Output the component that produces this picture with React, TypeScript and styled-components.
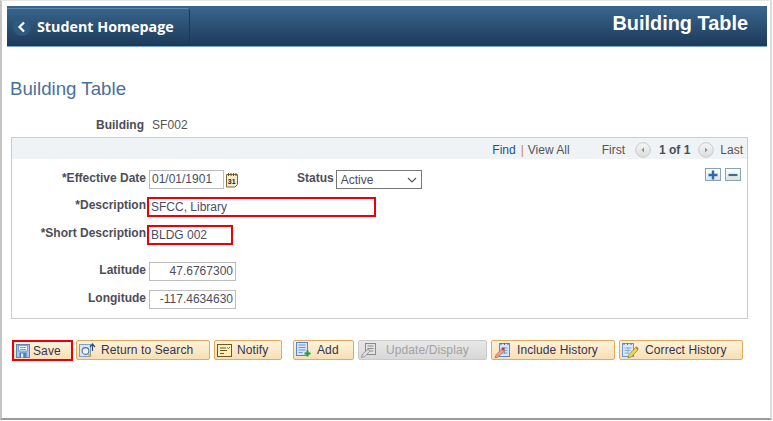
import { createGlobalStyle, styled } from "styled-components";

const GlobalStyle = createGlobalStyle`
  html, body { margin: 0; padding: 0; background: #ffffff; }
  body { font-family: "Liberation Sans", Arial, sans-serif; font-size: 12px; color: #333; }
`;

const SaveIcon = () => (
  <svg width="14" height="14" viewBox="0 0 14 14">
    <rect x="0.5" y="0.5" width="13" height="13" fill="#a6c6ee" stroke="#5b86c4" />
    <rect x="2.500" y="1.500" width="9" height="5.500" fill="#f3f7fd" stroke="#5b86c4" strokeWidth="0.7" />
    <path d="M4 3.500h6M4 5.500h6" stroke="#5b86c4" strokeWidth="0.8" />
    <rect x="3.500" y="8.500" width="7" height="5" fill="#4f7dbd" />
    <rect x="5" y="9.500" width="2.200" height="4" fill="#e8f0fb" />
  </svg>
);

const ReturnIcon = () => (
  <svg width="17" height="17" viewBox="0 0 17 17">
    <rect x="0.5" y="2.5" width="11" height="12" fill="#dbe7f7" stroke="#7d9fd0" />
    <circle cx="6.5" cy="9" r="3.4" fill="#eef5fc" stroke="#4e6f9e" strokeWidth="1.1" />
    <path d="M9 11.5l3 3" stroke="#d5b13c" strokeWidth="1.8" />
    <path d="M13.5 9V2.500M11 5l2.500-3L16 5" fill="none" stroke="#34506f" strokeWidth="1.2" />
  </svg>
);

const NotifyIcon = () => (
  <svg width="15" height="13" viewBox="0 0 15 13">
    <rect x="0.5" y="0.5" width="14" height="12" fill="#fbeeb8" stroke="#6b5a2a" />
    <path d="M3 4h6M3 6.500h7M3 9.500h4" stroke="#6b5a2a" strokeWidth="1" />
    <path d="M10 3.500l1.500 1 1.500-1.500" fill="none" stroke="#3d9a3d" strokeWidth="1" />
  </svg>
);

const AddIcon = () => (
  <svg width="15" height="16" viewBox="0 0 15 16">
    <rect x="0.5" y="0.5" width="11" height="13" fill="#d6e4f8" stroke="#5b86c4" />
    <path d="M2.500 3h7M2.500 5.500h7M2.500 8h7M2.500 10.500h4" stroke="#6f97d0" strokeWidth="1" />
    <path d="M11.500 8.500v6M8.500 11.500h6" stroke="#1f9a3c" strokeWidth="2" />
  </svg>
);

const UpdateIcon = () => (
  <svg width="15" height="15" viewBox="0 0 15 15">
    <rect x="4.500" y="0.500" width="10" height="11" fill="#e4e4e4" stroke="#8a8a8a" />
    <path d="M6.500 3h6M6.500 5.500h6M9 8h3.500" stroke="#8a8a8a" strokeWidth="1" />
    <path d="M0.500 14.500l1-3.500 5.500-5 2 2-5 5.500z" fill="#dcdcdc" stroke="#8a8a8a" strokeWidth="0.8" />
  </svg>
);

const IncludeIcon = () => (
  <svg width="17" height="17" viewBox="0 0 17 17">
    <rect x="5.500" y="1.500" width="10" height="13" fill="#d6e4f8" stroke="#5b86c4" />
    <path d="M7 1v2M10.500 1v2M14 1v2" stroke="#3f6cb0" strokeWidth="1" />
    <path d="M7.500 6h6M7.500 8.500h6M7.500 11h6M10.500 5v7" stroke="#6f97d0" strokeWidth="0.9" />
    <path d="M1 16l1.200-3.500 6-6 2.300 2.300-6 6z" fill="#e9a08e" stroke="#b8654f" strokeWidth="0.7" />
    <circle cx="9" cy="7" r="1.400" fill="#d8352a" />
  </svg>
);

const CorrectIcon = () => (
  <svg width="17" height="17" viewBox="0 0 17 17">
    <rect x="0.5" y="1.500" width="11" height="13" fill="#dbe7f8" stroke="#6d95cf" />
    <path d="M2 1v2M5.500 1v2M9 1v2" stroke="#3f6cb0" strokeWidth="1" />
    <path d="M2.500 6h7M2.500 8.500h6M2.500 11h4M6 5v7" stroke="#86a9da" strokeWidth="0.9" />
    <path d="M6 16l1-3.500 6.500-7 2.500 2.300-6.500 7z" fill="#f1d548" stroke="#8a7a26" strokeWidth="0.7" />
    <path d="M13.500 5.500l1-1 2 2-0.500 1.300z" fill="#e2574a" />
  </svg>
);

const CalendarIcon = () => (
  <svg width="13" height="16" viewBox="0 0 13 16">
    <path d="M0.500 2.500h11v10l-2.500 2.500h-8.500z" fill="#f6ecc8" stroke="#7c6a36" />
    <path d="M2.500 1v3M5 1v3M7.500 1v3M10 1v3" stroke="#5d5230" strokeWidth="1" />
    <text x="1.800" y="11.500" fontSize="7" fontWeight="700" fontFamily="Liberation Sans" fill="#222">31</text>
  </svg>
);

const NavIcon = ({ flip }: { flip?: boolean }) => (
  <svg width="16" height="16" viewBox="0 0 16 16">
    <defs>
      <linearGradient id="navFill" x1="0" y1="0" x2="0" y2="1">
        <stop offset="0" stopColor="#f6f6f6" />
        <stop offset="1" stopColor="#dcdcdc" />
      </linearGradient>
    </defs>
    <circle cx="8" cy="8" r="7.300" fill="url(#navFill)" stroke="#c8cccd" />
    <path d={flip ? "M7 5.500v5l2.500-2.500z" : "M9 5.500v5l-2.500-2.500z"} fill="#8a8f92" />
  </svg>
);

const Frame = styled.div`
  box-sizing: border-box;
  width: 772px;
  height: 420px;
  border-top: 1px solid #e6e6e6;
  border-left: 2px solid #c4c4c4;
  border-right: 2px solid #dcdcdc;
  border-bottom: 2px solid #9a9a9a;
  display: flex;
  flex-direction: column;
`;

const Banner = styled.header`
  height: 40px;
  margin: 5px 3px 0 5px;
  flex: none;
  display: flex;
  align-items: stretch;
  justify-content: space-between;
  background: linear-gradient(#3a668e, #1d3a58);
  border-bottom: 1px solid #7aa4d6;
`;

const BackButton = styled.div`
  width: 183px;
  margin: 2px 0 1px;
  display: flex;
  align-items: center;
  gap: 6px;
  padding-left: 6px;
  box-sizing: border-box;
  border: 1px solid #1c3854;
  border-left: none;
  border-top-color: #5e88ae;
  border-radius: 0 4px 4px 0;
  color: #ffffff;
  font-family: "Open Sans", sans-serif;
  font-weight: 700;
  font-size: 14.3px;
`;

const BackCircle = styled.span`
  width: 18px;
  height: 18px;
  border-radius: 50%;
  background: #2f5a80;
  display: flex;
  align-items: center;
  justify-content: center;
`;

const BannerTitle = styled.div`
  color: #ffffff;
  font-weight: 700;
  font-size: 19.9px;
  padding: 6px 19px 0 0;
`;

const Heading = styled.h1`
  margin: 30px 0 0 8px;
  font-weight: 400;
  font-size: 18.7px;
  line-height: 24px;
  color: #4b6f9e;
`;

const KeyRow = styled.div`
  display: flex;
  align-items: center;
  height: 16px;
  margin-top: 16px;
`;

const Label = styled.label`
  width: 142px;
  box-sizing: border-box;
  text-align: right;
  font-weight: 700;
  font-size: 12px;
  color: #4d4d57;
  flex: none;
`;

const KeyValue = styled.span`
  margin-left: 8px;
  color: #555;
  font-size: 12px;
  letter-spacing: 0.1px;
`;

const Panel = styled.section`
  box-sizing: border-box;
  width: 737px;
  height: 182px;
  margin: 4px 0 0 9px;
  border: 1px solid #cccccc;
  flex: none;
`;

const PanelHeader = styled.div`
  box-sizing: border-box;
  height: 21px;
  background: #f0f3f5;
  display: flex;
  align-items: center;
  justify-content: flex-end;
  padding: 2px 4px 0 0;
  font-size: 12px;
  color: #555;
`;

const PanelLink = styled.span`
  color: #1f4e9e;
`;

const Pipe = styled.span`
  color: #c28a3c;
  margin: 0 4px 0 5px;
`;

const NavGroup = styled.span`
  display: flex;
  align-items: center;
  gap: 6px;
  margin-left: 32px;
`;

const NavWord = styled.span<{ $after?: number }>`
  margin-right: ${(p) => p.$after ?? 0}px;
`;

const Count = styled.b`
  color: #44505a;
  margin: 0 2px;
`;

const PanelBody = styled.div`
  display: flex;
  flex-direction: column;
  padding-top: 11px;
`;

const FormRow = styled.div<{ $gap?: number }>`
  display: flex;
  align-items: center;
  height: 19px;
  margin-top: ${(p) => p.$gap ?? 0}px;
`;

const FieldLabel = styled(Label)`
  width: 134px;
  margin-top: -3px;
`;

const Input = styled.div<{ $w: number; $right?: boolean }>`
  box-sizing: border-box;
  width: ${(p) => p.$w}px;
  height: 19px;
  margin-left: 3px;
  padding: 0 2px;
  border: 1px solid #bdbdbd;
  background: #fff;
  font-size: 12px;
  line-height: 17px;
  color: #4d4d5c;
  text-align: ${(p) => (p.$right ? "right" : "left")};
`;

const MarkedInput = styled(Input)`
  margin-left: 1px;
  height: 20px;
  padding: 0 2px;
  border: 2px solid #e8000b;
  line-height: 17px;
`;

const CalendarSlot = styled.span`
  margin-left: 2px;
  display: flex;
`;

const StatusLabel = styled.label`
  margin-left: 58px;
  margin-top: -3px;
  font-weight: 700;
  color: #4d4d57;
`;

const Select = styled.div`
  box-sizing: border-box;
  width: 86px;
  height: 19px;
  margin-left: 2px;
  padding: 0 4px;
  border: 1px solid #777;
  display: flex;
  align-items: center;
  justify-content: space-between;
  color: #4d4d5c;
`;

const RowTools = styled.span`
  margin-left: auto;
  margin-right: 6px;
  display: flex;
  gap: 4px;
  align-self: flex-start;
  margin-top: -2px;
`;

const SquareButton = styled.span`
  box-sizing: border-box;
  width: 16px;
  height: 13px;
  border: 1px solid #8aa3b0;
  background: linear-gradient(#ffffff, #d8e2e8);
  display: flex;
  align-items: center;
  justify-content: center;
`;

const Toolbar = styled.div`
  display: flex;
  gap: 4px;
  margin: 21px 0 0 10px;
  flex: none;
`;

const ToolButton = styled.button<{ $w: number; $off?: boolean; $marked?: boolean; $push?: number }>`
  box-sizing: border-box;
  width: ${(p) => p.$w}px;
  height: ${(p) => (p.$marked ? 21 : 20)}px;
  margin-left: ${(p) => p.$push ?? 0}px;
  margin-right: ${(p) => (p.$marked ? -1 : 0)}px;
  padding: 0 0 0 2px;
  display: flex;
  align-items: center;
  gap: 3px;
  border: ${(p) => (p.$marked ? "2px solid #e8000b" : p.$off ? "1px solid #c9c9c9" : "1px solid #e3aa5c")};
  border-radius: ${(p) => (p.$marked ? 0 : 2)}px;
  background: ${(p) => (p.$off ? "linear-gradient(#e8e8e8, #d8d8d8)" : "linear-gradient(#fdf3dc, #f9dfb4)")};
  color: ${(p) => (p.$off ? "#a2a2a2" : "#34344e")};
  font-family: "Liberation Sans", Arial, sans-serif;
  font-size: 12px;
  letter-spacing: 0.1px;
`;

const IconSlot = styled.span<{ $w: number }>`
  width: ${(p) => p.$w}px;
  display: flex;
  flex: none;
`;

export default function App() {
  return (
    <Frame>
      <GlobalStyle />
      <Banner>
        <BackButton>
          <BackCircle>
            <svg width="10" height="12" viewBox="0 0 10 12">
              <path d="M7 1.500L2.500 6 7 10.500" fill="none" stroke="#ffffff" strokeWidth="2.200" />
            </svg>
          </BackCircle>
          Student Homepage
        </BackButton>
        <BannerTitle>Building Table</BannerTitle>
      </Banner>
      <Heading>Building Table</Heading>
      <KeyRow>
        <Label>Building</Label>
        <KeyValue>SF002</KeyValue>
      </KeyRow>
      <Panel>
        <PanelHeader>
          <PanelLink>Find</PanelLink>
          <Pipe>|</Pipe>
          View All
          <NavGroup>
            <NavWord $after={4}>First</NavWord>
            <NavIcon />
            <Count>1 of 1</Count>
            <NavIcon flip />
            <NavWord>Last</NavWord>
          </NavGroup>
        </PanelHeader>
        <PanelBody>
          <FormRow>
            <FieldLabel>*Effective Date</FieldLabel>
            <Input $w={75}>01/01/1901</Input>
            <CalendarSlot><CalendarIcon /></CalendarSlot>
            <StatusLabel>Status</StatusLabel>
            <Select>
              Active
              <svg width="10" height="6" viewBox="0 0 10 6">
                <path d="M1 1l4 4 4-4" fill="none" stroke="#555" strokeWidth="1.100" />
              </svg>
            </Select>
            <RowTools>
              <SquareButton>
                <svg width="10" height="10" viewBox="0 0 10 10">
                  <path d="M5 0.500v9M0.500 5h9" stroke="#2f6aa8" strokeWidth="2.400" />
                </svg>
              </SquareButton>
              <SquareButton>
                <svg width="10" height="10" viewBox="0 0 10 10">
                  <path d="M0.500 5h9" stroke="#3f6f8a" strokeWidth="2.200" />
                </svg>
              </SquareButton>
            </RowTools>
          </FormRow>
          <FormRow $gap={8}>
            <FieldLabel>*Description</FieldLabel>
            <MarkedInput $w={229}>SFCC, Library</MarkedInput>
          </FormRow>
          <FormRow $gap={9}>
            <FieldLabel>*Short Description</FieldLabel>
            <MarkedInput $w={86}>BLDG 002</MarkedInput>
          </FormRow>
          <FormRow $gap={18}>
            <FieldLabel>Latitude</FieldLabel>
            <Input $w={87} $right>47.6767300</Input>
          </FormRow>
          <FormRow $gap={9}>
            <FieldLabel>Longitude</FieldLabel>
            <Input $w={87} $right>-117.4634630</Input>
          </FormRow>
        </PanelBody>
      </Panel>
      <Toolbar>
        <ToolButton $w={61} $marked><IconSlot $w={14}><SaveIcon /></IconSlot>Save</ToolButton>
        <ToolButton $w={134}><IconSlot $w={19}><ReturnIcon /></IconSlot>Return to Search</ToolButton>
        <ToolButton $w={68}><IconSlot $w={17}><NotifyIcon /></IconSlot>Notify</ToolButton>
        <ToolButton $w={61} $push={7}><IconSlot $w={18}><AddIcon /></IconSlot>Add</ToolButton>
        <ToolButton $w={129} $off><IconSlot $w={22}><UpdateIcon /></IconSlot>Update/Display</ToolButton>
        <ToolButton $w={124}><IconSlot $w={20}><IncludeIcon /></IconSlot>Include History</ToolButton>
        <ToolButton $w={124}><IconSlot $w={20}><CorrectIcon /></IconSlot>Correct History</ToolButton>
      </Toolbar>
    </Frame>
  );
}
